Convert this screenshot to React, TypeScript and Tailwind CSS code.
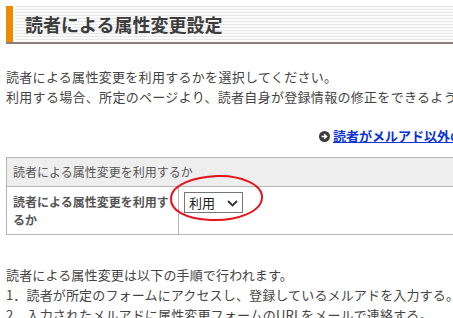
import { useState } from 'react';

const Header = () => (
  <div className="mt-[6px] flex h-[38px] border-b-2 border-[#8c7d7a]">
    <div className="w-[7px] bg-[#f08a00]" />
    <div className="ml-[2px] flex flex-1 items-center bg-[repeating-linear-gradient(to_bottom,#e6e6e6_0px,#e6e6e6_1px,#fbfbfb_1px,#fbfbfb_3px)] pl-[10px]">
      <h1 className="text-[18px] font-bold leading-none text-[#3c3c3c]">読者による属性変更設定</h1>
    </div>
  </div>
);

export default function App() {
  const [use, setUse] = useState('利用');

  return (
    <div className="h-[318px] w-[453px] overflow-hidden bg-white font-['Noto_Sans_CJK_JP',sans-serif] text-[#444]">
      <div className="w-[620px] pl-[6px]">
        <Header />

        <div className="mt-[23px] whitespace-nowrap text-[13px] leading-[20px] tracking-[0.3px]">
          <p>読者による属性変更を利用するかを選択してください。</p>
          <p>利用する場合、所定のページより、読者自身が登録情報の修正をできるようになります。</p>
        </div>

        <div className="mt-[19px] flex items-center whitespace-nowrap pl-[313px] text-[13px] leading-[20px]">
          <svg width="11" height="11" viewBox="0 0 12 12" className="mr-[3px] shrink-0">
            <circle cx="6" cy="6" r="6" fill="#3c3c3c" />
            <path d="M2.8 6h4.6M5.6 3.6 8.2 6 5.6 8.4" stroke="#fff" strokeWidth="1.7" fill="none" />
          </svg>
          <a href="#" className="font-bold text-[#0a33d6] underline">読者がメルアド以外の情報を変更できるようにするには</a>
        </div>

        <table className="mt-[11px] w-[600px] border-collapse text-[12px] text-[#555]">
          <tbody>
            <tr>
              <td colSpan={2} className="h-[29px] border border-[#b4b4b4] bg-[#eeeeee] px-[6px] leading-[18px]">
                読者による属性変更を利用するか
              </td>
            </tr>
            <tr>
              <td className="w-[172px] border border-[#b4b4b4] px-[6px] pb-[5px] pt-[6px] align-top font-bold leading-[18px]">
                読者による属性変更を利用するか
              </td>
              <td className="border border-[#b4b4b4] px-[5px] pt-[5px] align-top">
                <div className="relative inline-block">
                  <div className="relative flex h-[21px] w-[59px] items-center border border-[#767676] bg-white pl-[4px] text-[13px] text-[#222]">
                    <span>{use}</span>
                    <svg width="11" height="7" viewBox="0 0 11 7" className="absolute right-[4px] top-[7px]">
                      <path d="M1 1l4.5 4.5L10 1" stroke="#333" strokeWidth="1.8" fill="none" />
                    </svg>
                    <select
                      value={use}
                      onChange={(e) => setUse(e.target.value)}
                      className="absolute inset-0 opacity-0"
                    >
                      <option>利用</option>
                      <option>不可</option>
                    </select>
                  </div>
                  <svg width="100" height="50" viewBox="0 0 100 50" className="pointer-events-none absolute left-[-17px] top-[-18px]">
                    <path
                      d="M50 2C72 1 96 10 95 24C94 38 70 47 44 46C18 45 3 36 4 24C5 10 28 3 50 2Z"
                      stroke="#e5131b"
                      strokeWidth="2"
                      fill="none"
                    />
                  </svg>
                </div>
              </td>
            </tr>
          </tbody>
        </table>

        <div className="mt-[30px] whitespace-nowrap text-[13px] leading-[20px] tracking-[0.15px]">
          <p>読者による属性変更は以下の手順で行われます。</p>
          <p>1．読者が所定のフォームにアクセスし、登録しているメルアドを入力する。</p>
          <p>2．入力されたメルアドに属性変更フォームのURLをメールで連絡する。</p>
        </div>
      </div>
    </div>
  );
}
